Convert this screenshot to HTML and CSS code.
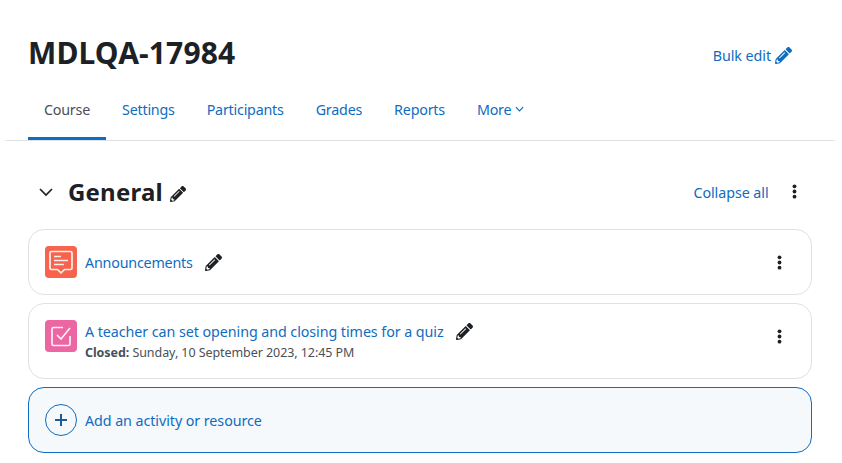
FILE: index.html
```html
<!DOCTYPE html>
<html>
<head>
	<meta charset="UTF-8">
	<title>MDLQA-17984</title>
	<link rel="stylesheet" href="styles.css">
</head>
<body>
	<svg class="defs" width="0" height="0">
		<symbol id="pencil" viewBox="0 0 512 512">
			<path d="M497.900 142.100l-46.100 46.100c-4.700 4.700-12.300 4.700-17 0l-111-111c-4.700-4.700-4.700-12.300 0-17l46.100-46.100c18.700-18.700 49.100-18.700 67.900 0l60.100 60.100c18.800 18.700 18.800 49.100 0 67.900zM284.200 99.800L21.600 362.400.4 483.900c-2.900 16.400 11.400 30.600 27.800 27.800l121.500-21.300 262.600-262.600c4.700-4.700 4.700-12.300 0-17l-111-111c-4.800-4.700-12.400-4.700-17.100 0zM124.100 339.900c-5.500-5.500-5.500-14.300 0-19.800l154-154c5.500-5.500 14.300-5.500 19.800 0s5.500 14.300 0 19.800l-154 154c-5.500 5.500-14.300 5.500-19.800 0zM88 424h48v36.300l-64.500 11.300-31.100-31.100L51.700 376H88v48z"/>
		</symbol>
		<symbol id="dots" viewBox="0 0 5 15">
			<circle cx="2.500" cy="2.300" r="1.900"/>
			<circle cx="2.500" cy="7.500" r="1.900"/>
			<circle cx="2.500" cy="12.700" r="1.900"/>
		</symbol>
	</svg>

	<div class="page">
		<header class="head">
			<h1>MDLQA-17984</h1>
			<a class="bulk" href="#">Bulk edit <svg class="pen pen-blue"><use href="#pencil"/></svg></a>
		</header>

		<nav class="tabs">
			<a class="tab active" href="#">Course</a>
			<a class="tab" href="#">Settings</a>
			<a class="tab" href="#">Participants</a>
			<a class="tab" href="#">Grades</a>
			<a class="tab" href="#">Reports</a>
			<a class="tab" href="#">More <svg class="more-caret" viewBox="0 0 10 6"><path d="M1 1l4 4 4-4"/></svg></a>
		</nav>

		<section class="content">
			<div class="section-head">
				<svg class="chevron" viewBox="0 0 16 10"><path d="M2 2l6 6 6-6"/></svg>
				<h2>General</h2>
				<svg class="pen pen-title"><use href="#pencil"/></svg>
				<a class="collapse" href="#">Collapse all</a>
				<svg class="dots"><use href="#dots"/></svg>
			</div>

			<div class="card card-one">
				<div class="activity-icon orange">
					<svg viewBox="0 0 24 24"><path d="M2.500 1.500h19a1.500 1.500 0 0 1 1.500 1.500v15a1.500 1.500 0 0 1-1.500 1.500H15.500L12 22.800 8.500 19.500H2.500A1.500 1.500 0 0 1 1 18V3a1.500 1.500 0 0 1 1.500-1.500z"/><path d="M5 6.500h7M5 10.500h14M5 14.500h10"/></svg>
				</div>
				<a class="name" href="#">Announcements</a>
				<svg class="pen pen-one"><use href="#pencil"/></svg>
				<svg class="dots card-dots"><use href="#dots"/></svg>
			</div>

			<div class="card card-two">
				<div class="activity-icon pink">
					<svg viewBox="0 0 24 24"><path d="M14 3.500H4.500A1.500 1.500 0 0 0 3 5v15a1.500 1.500 0 0 0 1.500 1.500h15A1.500 1.500 0 0 0 21 20V12"/><path d="M8 11l4 4 9-11"/></svg>
				</div>
				<div class="info">
					<div class="title-row">
						<a class="name" href="#">A teacher can set opening and closing times for a quiz</a>
						<svg class="pen pen-one"><use href="#pencil"/></svg>
					</div>
					<div class="dates"><b>Closed:</b> Sunday, 10 September 2023, 12:45 PM</div>
				</div>
				<svg class="dots card-dots"><use href="#dots"/></svg>
			</div>

			<a class="add" href="#">
				<span class="plus"><svg viewBox="0 0 12 12"><path d="M6 0v12M0 6h12"/></svg></span>
				Add an activity or resource
			</a>
		</section>
	</div>
</body>
</html>
```
FILE: styles.css
```css
* {
    box-sizing: border-box;
    margin: 0;
    padding: 0;
}

body {
    font-family: "Noto Sans", "Open Sans", Arial, sans-serif;
    font-size: 14.3px;
    letter-spacing: -0.07px;
    color: #1d2125;
    background-color: #fff;
    overflow: hidden;
}

a {
    color: #0f6cbf;
    text-decoration: none;
}

.defs {
    position: absolute;
}

.page {
    padding: 0 7px 0 5px;
}

.head {
    display: flex;
    justify-content: space-between;
    align-items: center;
    height: 80px;
    padding: 24px 43px 0 23px;
}

.head h1 {
    font-size: 30px;
    font-weight: 700;
    letter-spacing: 0.15px;
}

.bulk {
    display: flex;
    align-items: center;
    gap: 4px;
    margin-top: 6px;
}

.pen {
    width: 17px;
    height: 17px;
    fill: #1d2125;
}

.pen-blue {
    fill: #0f6cbf;
}

.tabs {
    display: flex;
    height: 61px;
    padding-left: 23px;
    border-bottom: 1px solid #dee2e6;
}

.tab {
    display: flex;
    align-items: center;
    gap: 4px;
    padding: 0 16px 2px;
    height: 60px;
    letter-spacing: -0.22px;
}

.tab.active {
    color: #495057;
    border-bottom: 3px solid #0f6cbf;
    padding: 1px 16px 0;
}

.more-caret {
    width: 9px;
    height: 6px;
    fill: none;
    stroke: #0f6cbf;
    stroke-width: 1.3;
}

.content {
    padding: 0 23px;
}

.section-head {
    display: flex;
    align-items: center;
    height: 88px;
    padding-top: 14px;
}

.chevron {
    width: 16px;
    height: 10px;
    margin: 0 14px 0 10px;
    fill: none;
    stroke: #1d2125;
    stroke-width: 1.7;
}

.section-head h2 {
    font-size: 24px;
    font-weight: 700;
    letter-spacing: 0.2px;
    margin-top: -2px;
}

.pen-title {
    width: 16px;
    height: 16px;
    margin: 4px 0 0 7px;
}

.collapse {
    margin-left: auto;
}

.dots {
    width: 5px;
    height: 15px;
    fill: #1d2125;
}

.section-head .dots {
    margin: -2px 15.500px 0 23px;
}

.card {
    display: flex;
    align-items: center;
    border: 1px solid #dee2e6;
    border-radius: 16px;
    padding: 0 29.500px 0 16px;
    margin-bottom: 8px;
}

.card-one {
    height: 66px;
}

.card-one .name {
    letter-spacing: -0.2px;
}

.card-two {
    height: 76px;
}

.card-two .activity-icon,
.card-two .card-dots {
    margin-bottom: 10px;
}

.activity-icon {
    flex: none;
    display: flex;
    align-items: center;
    justify-content: center;
    width: 32px;
    height: 32px;
    border-radius: 4px;
    margin-right: 8px;
}

.activity-icon svg {
    width: 24px;
    height: 24px;
    fill: none;
    stroke: #fff;
    stroke-width: 1.7;
    opacity: 0.9;
}

.orange {
    background-color: #f7634d;
}

.pink {
    background-color: #eb66a2;
}

.pen-one {
    margin-left: 12px;
}

.card-dots {
    margin-left: auto;
}

.title-row {
    display: flex;
    align-items: center;
}

.dates {
    font-size: 12.5px;
    color: #495057;
    margin-top: 3px;
}

.add {
    display: flex;
    align-items: center;
    gap: 8px;
    height: 66px;
    padding-left: 16px;
    border: 1px solid #0f6cbf;
    border-radius: 16px;
    background-color: #f5f9fc;
}

.plus {
    display: flex;
    align-items: center;
    justify-content: center;
    width: 32px;
    height: 32px;
    border: 1px solid #0f6cbf;
    border-radius: 50%;
}

.plus svg {
    width: 12px;
    height: 12px;
    fill: none;
    stroke: #1b5a9c;
    stroke-width: 2;
}
```
